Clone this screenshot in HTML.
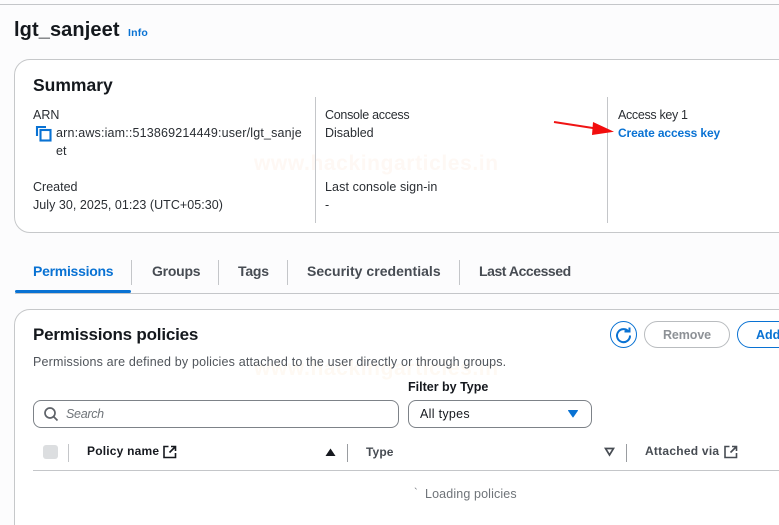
<!DOCTYPE html>
<html><head><meta charset="utf-8"><style>
html,body{margin:0;padding:0;width:779px;height:525px;overflow:hidden}
body{background:#fcfcfd;font-family:"Liberation Sans",sans-serif;color:#16191f}
#p{position:relative;width:779px;height:525px;overflow:hidden;background:#fcfcfd}
.t{position:absolute;white-space:nowrap;font-size:12.5px;line-height:18px;color:#2a2e33}
.b{font-weight:700}
.l{position:absolute;background:#c4c6c9}
.tab{position:absolute;top:261px;font-size:14px;line-height:20px;font-weight:700;color:#474c53;white-space:nowrap}
.box{position:absolute;background:#fff;border:1px solid #c6c8ca;box-sizing:border-box}
.wm{position:absolute;white-space:nowrap;font-size:21px;line-height:24px;font-weight:700;letter-spacing:.6px}
svg{position:absolute}
</style></head><body><div id="p">
<div class="l" style="left:0;top:4px;width:779px;height:1px"></div>
<div class="t b" style="left:14px;top:17px;font-size:20px;line-height:26px;color:#14181d;letter-spacing:.1px">lgt_sanjeet</div>
<div class="t b" style="left:128px;top:25px;font-size:10.5px;line-height:16px;color:#0972d3;letter-spacing:.2px">Info</div>

<div class="box" style="left:14px;top:59px;width:800px;height:174px;border-radius:16px"></div>
<div class="wm" style="left:254px;top:152px;color:#fef8f4">www.hackingarticles.in</div>
<div class="t b" style="left:33px;top:73px;font-size:17.5px;line-height:24px;color:#14181d">Summary</div>
<div class="t" style="left:33px;top:106px">ARN</div>
<svg style="left:35px;top:125px" width="17" height="17" viewBox="0 0 17 17" fill="none" stroke="#0972d3" stroke-width="2.100"><path d="M2 11V2H11"/><rect x="5.500" y="5" width="10" height="10.500"/></svg>
<div class="t" style="left:56px;top:124px;letter-spacing:.17px">arn:aws:iam::513869214449:user/lgt_sanje</div>
<div class="t" style="left:56px;top:142px">et</div>
<div class="t" style="left:33px;top:178px">Created</div>
<div class="t" style="left:33px;top:196px;letter-spacing:.04px">July 30, 2025, 01:23 (UTC+05:30)</div>
<div class="l" style="left:315px;top:97px;width:1px;height:126px"></div>
<div class="t" style="left:325px;top:106px;letter-spacing:-.28px">Console access</div>
<div class="t" style="left:325px;top:124px">Disabled</div>
<div class="t" style="left:325px;top:178px;letter-spacing:.1px">Last console sign-in</div>
<div class="t" style="left:325px;top:196px">-</div>
<div class="l" style="left:607px;top:97px;width:1px;height:126px"></div>
<div class="t" style="left:618px;top:106px;letter-spacing:-.33px">Access key 1</div>
<div class="t b" style="left:618px;top:124px;color:#0972d3;font-size:12px;letter-spacing:-.12px">Create access key</div>
<svg style="left:550px;top:115px" width="70" height="25" viewBox="0 0 70 25"><path d="M4 7L46 13.500" stroke="#f01414" stroke-width="2"/><path d="M43 7L64 16.700L42 20Z" fill="#f20d0d"/></svg>

<div class="tab" style="left:33px;color:#0972d3;letter-spacing:-.27px">Permissions</div>
<div class="tab" style="left:152px;letter-spacing:-.25px">Groups</div>
<div class="tab" style="left:238px;letter-spacing:-.2px">Tags</div>
<div class="tab" style="left:307px;letter-spacing:.03px">Security credentials</div>
<div class="tab" style="left:479px;letter-spacing:-.45px">Last Accessed</div>
<div class="l" style="left:131px;top:260px;width:1px;height:25px"></div>
<div class="l" style="left:218px;top:260px;width:1px;height:25px"></div>
<div class="l" style="left:287px;top:260px;width:1px;height:25px"></div>
<div class="l" style="left:459px;top:260px;width:1px;height:25px"></div>
<div class="l" style="left:15px;top:293px;width:764px;height:1px"></div>
<div style="position:absolute;left:15px;top:290px;width:116px;height:3px;background:#0972d3;border-radius:2px"></div>

<div class="box" style="left:14px;top:309px;width:800px;height:240px;border-radius:16px"></div>
<div class="wm" style="left:254px;top:357px;color:#fef9f3">www.hackingarticles.in</div>
<div class="t b" style="left:33px;top:323px;font-size:17px;line-height:24px;color:#14181d;letter-spacing:-.2px">Permissions policies</div>
<div class="t" style="left:33px;top:353px;color:#50555b;letter-spacing:.175px">Permissions are defined by policies attached to the user directly or through groups.</div>

<svg style="left:610px;top:321px" width="28" height="28" viewBox="0 0 28 28" fill="none"><circle cx="13.500" cy="13.500" r="13" fill="#fff" stroke="#0972d3"/><path d="M18.500 10.500A6.500 6.500 0 1 0 20 14.500" stroke="#0972d3" stroke-width="2"/><path d="M14.500 10.500H19.500V6.500" stroke="#0972d3" stroke-width="2"/></svg>
<div style="position:absolute;left:644px;top:321px;width:86px;height:27px;border:1px solid #b9bcbf;border-radius:14px;box-sizing:border-box;background:#fff"></div>
<div class="t b" style="left:663px;top:326px;color:#8d9196;font-size:12.500px;letter-spacing:-.1px">Remove</div>
<div style="position:absolute;left:737px;top:321px;width:80px;height:27px;border:1px solid #0972d3;border-radius:14px;box-sizing:border-box;background:#fff"></div>
<div class="t b" style="left:756px;top:326px;color:#0972d3;font-size:12.500px">Add</div>

<div class="t b" style="left:408px;top:378px;color:#16191f;font-size:12.500px">Filter by Type</div>
<div style="position:absolute;left:33px;top:400px;width:366px;height:28px;border:1px solid #7d8288;border-radius:8px;box-sizing:border-box;background:#fff"></div>
<svg style="left:43px;top:406px" width="16" height="16" viewBox="0 0 16 16" fill="none" stroke="#5f6369" stroke-width="1.700"><circle cx="7" cy="7" r="5"/><path d="M10.500 10.500L14.500 14.500"/></svg>
<div class="t" style="left:66px;top:404.500px;font-style:italic;color:#6f7479;letter-spacing:-.3px">Search</div>
<div style="position:absolute;left:408px;top:400px;width:184px;height:28px;border:1px solid #7d8288;border-radius:8px;box-sizing:border-box;background:#fff"></div>
<div class="t" style="left:420px;top:404.500px;color:#16191f;letter-spacing:.3px">All types</div>
<svg style="left:567px;top:409px" width="12" height="10" viewBox="0 0 12 10"><path d="M1.500 1.500H10.500L6 8Z" fill="#0972d3" stroke="#0972d3" stroke-linejoin="round"/></svg>

<div style="position:absolute;left:43px;top:445px;width:15px;height:14px;background:#dcdee0;border-radius:3px"></div>
<div class="l" style="left:68px;top:444px;width:1px;height:18px"></div>
<div class="t b" style="left:87px;top:442px;color:#16191f;font-size:12px;letter-spacing:.2px">Policy name</div>
<svg style="left:163px;top:445px" width="14" height="14" viewBox="0 0 14 14" fill="none" stroke="#16191f" stroke-width="1.600"><path d="M5.500 1.500H1V12.500H12.500V8"/><path d="M8 1.500H12.500V6M12.500 1.500L6.500 7.500"/></svg>
<svg style="left:325px;top:448px" width="11" height="9" viewBox="0 0 11 9"><path d="M5.500 .5L10.500 8H.5Z" fill="#16191f"/></svg>
<div class="l" style="left:347px;top:444px;width:1px;height:18px;background:#9a9da1"></div>
<div class="t b" style="left:366px;top:443px;color:#474c53;font-size:12px;letter-spacing:.1px">Type</div>
<svg style="left:604px;top:447px" width="11" height="10" viewBox="0 0 11 10" fill="none"><path d="M1.500 1.500H9.500L5.500 8Z" stroke="#474c53" stroke-width="1.700"/></svg>
<div class="l" style="left:626px;top:444px;width:1px;height:18px;background:#9a9da1"></div>
<div class="t b" style="left:645px;top:442px;color:#474c53;font-size:12px;letter-spacing:.25px">Attached via</div>
<svg style="left:724px;top:445px" width="14" height="14" viewBox="0 0 14 14" fill="none" stroke="#474c53" stroke-width="1.600"><path d="M5.500 1.500H1V12.500H12.500V8"/><path d="M8 1.500H12.500V6M12.500 1.500L6.500 7.500"/></svg>
<div class="l" style="left:33px;top:470px;width:746px;height:1px"></div>
<div class="t" style="left:414px;top:484px;color:#6f7479;font-size:11px">`</div>
<div class="t" style="left:425px;top:484.500px;color:#6f7479;letter-spacing:.13px">Loading policies</div>
</div></body></html>
